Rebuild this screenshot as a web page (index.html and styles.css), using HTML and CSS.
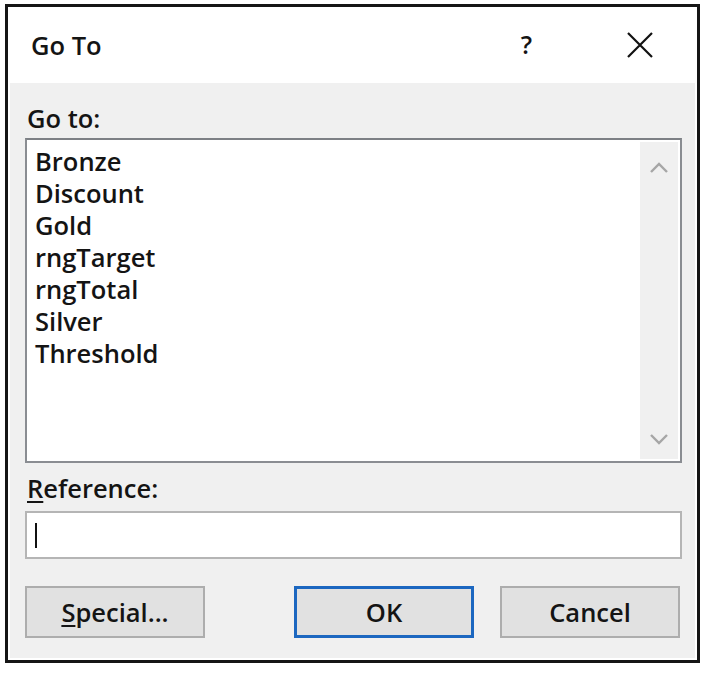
FILE: index.html
```html
<!DOCTYPE html>
<html>
<head>
<meta charset="utf-8">
<link rel="stylesheet" href="styles.css">
</head>
<body>
<div class="dialog">
  <div class="titlebar">
    <span class="title">Go To</span>
    <span class="help">?</span>
    <span class="close">
      <svg width="26" height="26" viewBox="0 0 26 26"><path d="M1 1 L25 25 M25 1 L1 25" stroke="#111" stroke-width="2.2" fill="none"/></svg>
    </span>
  </div>
  <div class="content">
    <div class="label">Go to:</div>
    <div class="listbox">
      <ul class="items">
        <li>Bronze</li>
        <li>Discount</li>
        <li>Gold</li>
        <li>rngTarget</li>
        <li>rngTotal</li>
        <li>Silver</li>
        <li>Threshold</li>
      </ul>
      <div class="scrollbar">
        <svg class="chev" width="20" height="12" viewBox="0 0 20 12"><path d="M2 10 L10 2 L18 10" stroke="#a6a6a6" stroke-width="2.4" fill="none"/></svg>
        <svg class="chev" width="20" height="12" viewBox="0 0 20 12"><path d="M2 2 L10 10 L18 2" stroke="#a6a6a6" stroke-width="2.4" fill="none"/></svg>
      </div>
    </div>
    <div class="label ref"><u>R</u>eference:</div>
    <div class="textbox"><span class="caret"></span></div>
    <div class="buttons">
      <div class="btn"><u>S</u>pecial...</div>
      <div class="spacer"></div>
      <div class="btn default">OK</div>
      <div class="btn">Cancel</div>
    </div>
  </div>
</div>
</body>
</html>
```
FILE: styles.css
```css
html, body {
  margin: 0;
  padding: 0;
  background: #ffffff;
}
body {
  font-family: "Open Sans", "Noto Sans", sans-serif;
  font-size: 25.5px;
  font-weight: 600;
  color: #141414;
}
.dialog {
  margin: 4px 9px 0 5px;
  width: 695px;
  height: 659px;
  box-sizing: border-box;
  border: 3px solid #161616;
  background: #ffffff;
  padding: 0 2px 2px 2px;
  display: flex;
  flex-direction: column;
}
.titlebar {
  height: 76px;
  display: flex;
  align-items: center;
  background: #ffffff;
  padding-left: 21px;
  padding-right: 42px;
}
.title {
  flex: 1;
  margin-top: -1px;
}
.help {
  font-size: 25px;
  margin-right: 95px;
  margin-top: -2px;
}
.close {
  display: flex;
  margin-top: -1px;
}
.content {
  flex: 1;
  background: #f0f0f0;
  padding: 20px 13px 0 15px;
  display: flex;
  flex-direction: column;
}
.label {
  line-height: 30px;
  padding-left: 2px;
}
.listbox {
  margin-top: 5px;
  height: 325px;
  box-sizing: border-box;
  border: 2px solid #8a8d92;
  border-top-color: #7d8085;
  background: #ffffff;
  display: flex;
}
.items {
  flex: 1;
  list-style: none;
  margin: 0;
  padding: 5px 0 0 8px;
  line-height: 32px;
}
.scrollbar {
  width: 38px;
  margin: 2px 2px 2px 0;
  background: #f0f0f0;
  display: flex;
  flex-direction: column;
  justify-content: space-between;
  align-items: center;
  padding: 20px 0 14px;
}
.chev { display: block; }
.ref {
  margin-top: 10px;
}
.textbox {
  margin-top: 8px;
  height: 48px;
  box-sizing: border-box;
  border: 2px solid #b5b5b5;
  background: #ffffff;
  display: flex;
  align-items: center;
  padding-left: 8px;
}
.caret {
  width: 2px;
  height: 25px;
  background: #111;
}
.buttons {
  margin-top: 27px;
  display: flex;
  gap: 26px;
}
.btn {
  width: 180px;
  height: 52px;
  box-sizing: border-box;
  border: 2px solid #adadad;
  background: #e1e1e1;
  display: flex;
  align-items: center;
  justify-content: center;
}
.buttons .spacer { margin-left: -26px; margin-right: -26px; width: 89px; }
.btn.default {
  border: 3px solid #1c67c0;
}
u { text-underline-offset: 3px; }
```
